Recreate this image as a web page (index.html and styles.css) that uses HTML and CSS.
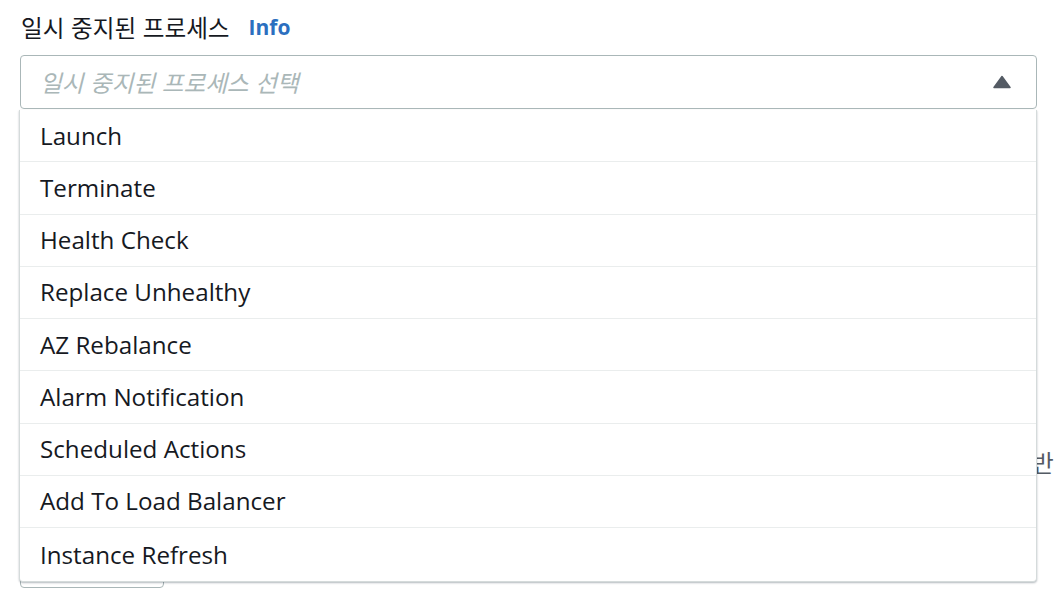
FILE: index.html
```html
<!DOCTYPE html>
<html lang="ko">
<head>
<meta charset="utf-8">
<link rel="stylesheet" href="styles.css">
</head>
<body>
<div class="page">
  <div class="field">
    <div class="label-row">
      <span class="label">일시 중지된 프로세스</span>
      <a class="info">Info</a>
    </div>
    <div class="select-wrap">
      <div class="select">
        <span class="placeholder">일시 중지된 프로세스 선택</span>
        <svg class="caret" width="18" height="14" viewBox="0 0 18 14"><path d="M9 1.5 L17 12.5 L1 12.5 Z" fill="#545b64" stroke="#545b64" stroke-width="1.5" stroke-linejoin="round"/></svg>
      </div>
      <ul class="menu">
        <li class="item">Launch</li>
        <li class="item">Terminate</li>
        <li class="item">Health Check</li>
        <li class="item">Replace Unhealthy</li>
        <li class="item">AZ Rebalance</li>
        <li class="item">Alarm Notification</li>
        <li class="item">Scheduled Actions</li>
        <li class="item">Add To Load Balancer</li>
        <li class="item">Instance Refresh</li>
      </ul>
    </div>
  </div>
  <p class="behind-text">반영</p>
  <div class="actions">
    <span class="btn"></span>
  </div>
</div>
</body>
</html>
```
FILE: styles.css
```css
html, body {
  margin: 0;
  padding: 0;
  background: #ffffff;
  overflow: hidden;
}
body {
  width: 1054px;
  height: 590px;
  font-family: "Open Sans", "Noto Sans CJK KR", sans-serif;
  color: #16191f;
}
.page {
  padding: 0 17px 0 20px;
  position: relative;
  height: 590px;
  box-sizing: border-box;
}
.field {
  padding-top: 11px;
}
.label-row {
  display: flex;
  align-items: center;
  gap: 19px;
  height: 32px;
  padding-left: 1px;
}
.label {
  font-family: "Noto Sans CJK KR", sans-serif;
  font-size: 23.6px;
  color: #16191f;
}
.info {
  font-family: "Open Sans", sans-serif;
  font-weight: 700;
  font-size: 21px;
  color: #2b6fbf;
}
.select-wrap {
  position: relative;
  margin-top: 12px;
}
.select {
  height: 54px;
  box-sizing: border-box;
  border: 1px solid #aab7b8;
  border-radius: 4px;
  display: flex;
  align-items: center;
  justify-content: space-between;
  padding: 0 25px 0 19px;
}
.placeholder {
  font-family: "Noto Sans CJK KR", sans-serif;
  font-size: 23.6px;
  font-style: italic;
  color: #aab7b8;
}
.caret {
  display: block;
}
.menu {
  position: absolute;
  left: -1px;
  right: 0;
  top: 55px;
  margin: 0;
  padding: 0;
  list-style: none;
  background: #ffffff;
  border: 1px solid #d5dbdb;
  border-top: none;
  box-shadow: 0 1px 2px rgba(0, 22, 40, 0.3);
  border-radius: 0 0 4px 4px;
  z-index: 2;
}
.item {
  height: 52.25px;
  box-sizing: border-box;
  border-bottom: 1px solid #eaeded;
  display: flex;
  align-items: center;
  padding-left: 20px;
  font-size: 24.2px;
  padding-bottom: 1px;
}
.item:last-child {
  border-bottom: none;
  height: 53px;
}
.behind-text {
  margin: 0;
  margin-top: 336px;
  padding-left: 1012px;
  white-space: nowrap;
  font-family: "Noto Sans CJK KR", sans-serif;
  font-size: 23.6px;
  color: #545b64;
}
.actions {
  margin-top: 69px;
}
.btn {
  display: block;
  width: 144px;
  height: 40px;
  box-sizing: border-box;
  border: 1px solid #aab7b8;
  border-radius: 4px;
  background: #ffffff;
}
```
